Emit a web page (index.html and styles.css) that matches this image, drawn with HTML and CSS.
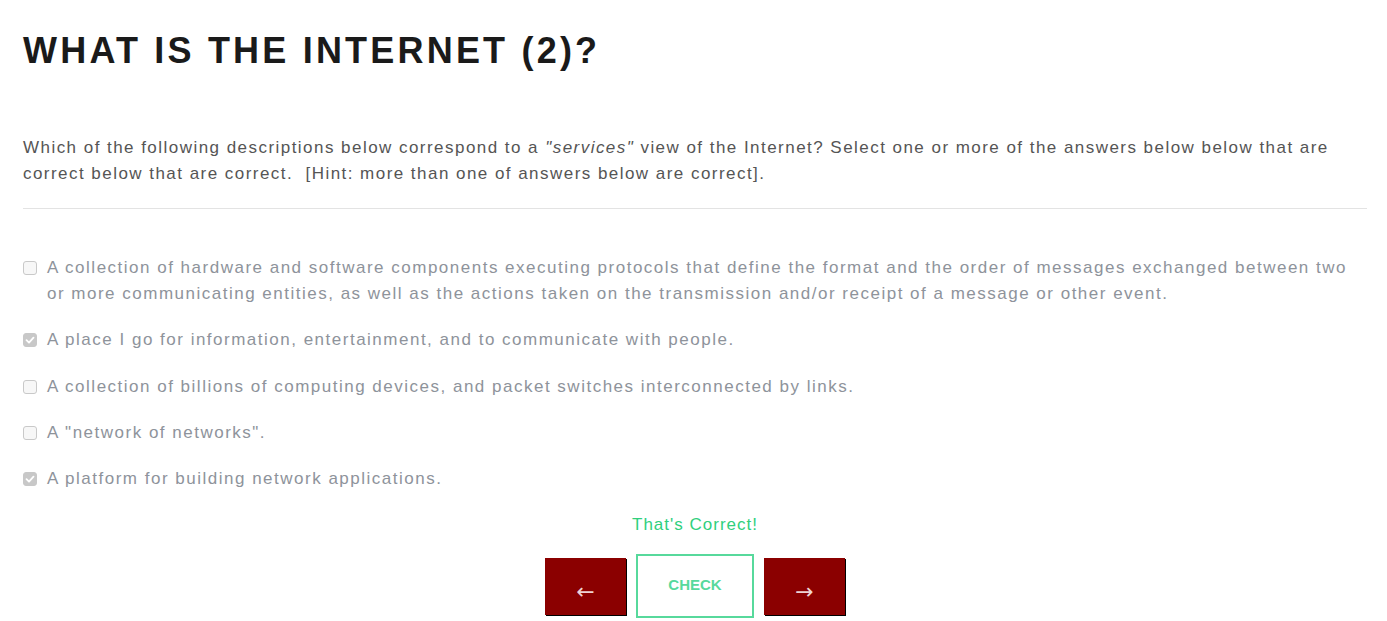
FILE: index.html
```html
<!DOCTYPE html>
<html>
<head>
<meta charset="utf-8">
<link rel="stylesheet" href="styles.css">
</head>
<body>
<div class="page">
  <h1 class="title">WHAT IS THE INTERNET (2)?</h1>
  <p class="question">Which of the following descriptions below correspond to a <em>"services"</em> view of the Internet? Select one or more of the answers below below that are correct below that are correct.&nbsp; [Hint: more than one of answers below are correct].</p>
  <hr class="rule">
  <ul class="options">
    <li class="option"><span class="box"></span><span class="label">A collection of hardware and software components executing protocols that define the format and the order of messages exchanged between two or more communicating entities, as well as the actions taken on the transmission and/or receipt of a message or other event.</span></li>
    <li class="option"><span class="box checked"><svg viewBox="0 0 14 14" width="14" height="14"><path d="M3.5 7.2 L6 9.6 L10.5 4.6" fill="none" stroke="#fff" stroke-width="1.8" stroke-linecap="round" stroke-linejoin="round"/></svg></span><span class="label">A place I go for information, entertainment, and to communicate with people.</span></li>
    <li class="option"><span class="box"></span><span class="label">A collection of billions of computing devices, and packet switches interconnected by links.</span></li>
    <li class="option"><span class="box"></span><span class="label">A "network of networks".</span></li>
    <li class="option"><span class="box checked"><svg viewBox="0 0 14 14" width="14" height="14"><path d="M3.5 7.2 L6 9.6 L10.5 4.6" fill="none" stroke="#fff" stroke-width="1.8" stroke-linecap="round" stroke-linejoin="round"/></svg></span><span class="label">A platform for building network applications.</span></li>
  </ul>
  <div class="feedback">That's Correct!</div>
  <div class="controls">
    <button class="nav">&larr;</button>
    <button class="check">CHECK</button>
    <button class="nav">&rarr;</button>
  </div>
</div>
</body>
</html>
```

FILE: styles.css
```css
* { box-sizing: border-box; }
html, body { margin: 0; padding: 0; background: #fff; }
body { font-family: "Liberation Sans", Arial, sans-serif; }
.page { padding: 0 20px 0 23px; }
.title {
  margin: 0;
  padding-top: 31px;
  font-size: 36px;
  line-height: 40px;
  font-weight: 700;
  letter-spacing: 3.2px;
  color: #1a1a1a;
}
.question {
  margin: 64px 0 0;
  font-size: 17px;
  line-height: 26px;
  letter-spacing: 1.46px;
  color: #555;
}
.rule {
  border: 0;
  border-top: 1px solid #e3e3e3;
  margin: 21px 0 0;
}
.options {
  list-style: none;
  margin: 46px 0 0;
  padding: 0;
}
.option {
  display: flex;
  align-items: flex-start;
  margin-bottom: 20.3px;
  font-size: 17px;
  line-height: 26px;
  letter-spacing: 1.5px;
  color: #8e939b;
}
.box {
  flex: none;
  width: 14px;
  height: 14px;
  margin-top: 6px;
  margin-right: 10px;
  border: 1px solid #c9c9c9;
  border-radius: 3px;
  background: #f7f7f7;
  display: flex;
}
.box.checked {
  background: #c8c8c8;
  border-color: #c8c8c8;
}
.box.checked svg { margin: -1px; }
.feedback {
  text-align: center;
  margin-top: 6px;
  font-size: 17px;
  line-height: 26px;
  letter-spacing: 1px;
  color: #2fcf7d;
}
.controls {
  display: flex;
  justify-content: center;
  align-items: center;
  gap: 10px;
  margin-top: 16px;
}
.nav {
  width: 81px;
  height: 57px;
  border: 0;
  background: #8b0000;
  box-shadow: 1px 1px 0 #000;
  color: #eed4d4;
  font-size: 22px;
  font-family: "DejaVu Sans", sans-serif;
  padding: 10px 0 0;
}
.check {
  width: 118px;
  height: 64px;
  border: 2px solid #57d99c;
  background: #fff;
  color: #57d99c;
  font-weight: 700;
  font-size: 15px;
  font-family: "Liberation Sans", Arial, sans-serif;
  padding: 0 0 4px;
}
```
